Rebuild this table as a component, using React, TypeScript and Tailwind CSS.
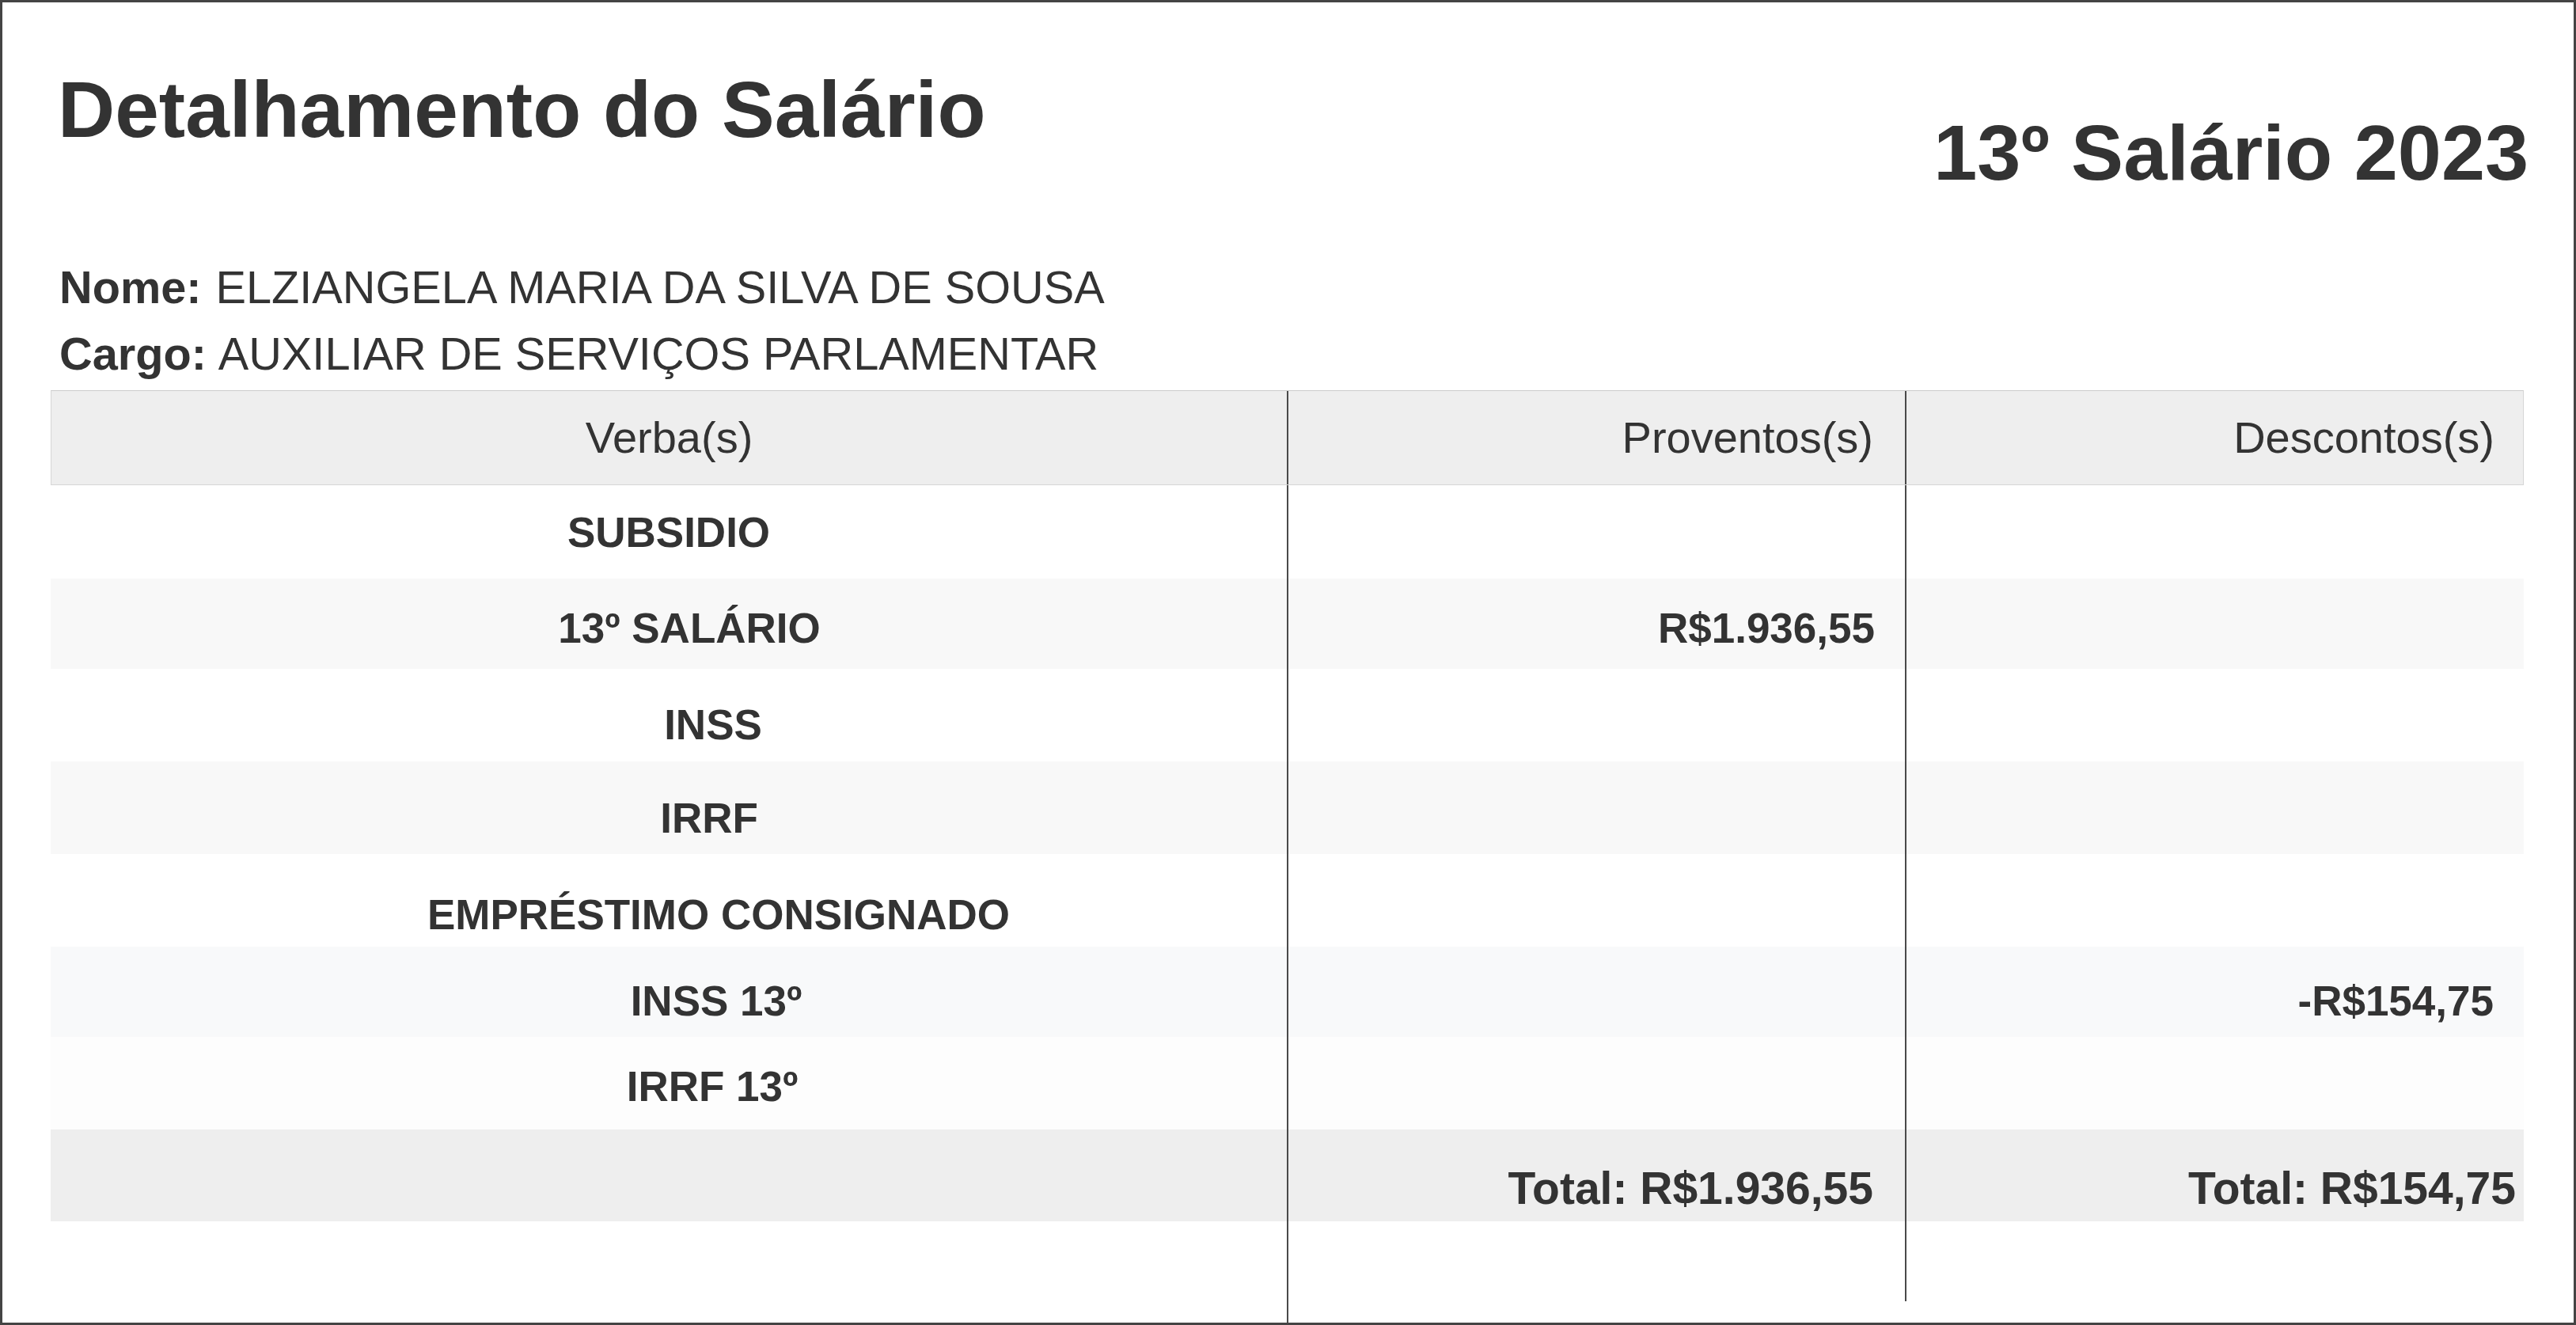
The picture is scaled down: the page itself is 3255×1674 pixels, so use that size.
const rows = [
  { verba: "SUBSIDIO", proventos: "", descontos: "", bg: "bg-white", h: "h-[118px]", pt: "pt-[33px]", pl: "pl-0" },
  { verba: "13º SALÁRIO", proventos: "R$1.936,55", descontos: "", bg: "bg-[#f8f8f8]", h: "h-[114px]", pt: "pt-[36px]", pl: "pl-[52px]" },
  { verba: "INSS", proventos: "", descontos: "", bg: "bg-white", h: "h-[117px]", pt: "pt-[44px]", pl: "pl-[112px]" },
  { verba: "IRRF", proventos: "", descontos: "", bg: "bg-[#f8f8f8]", h: "h-[117px]", pt: "pt-[45px]", pl: "pl-[102px]" },
  { verba: "EMPRÉSTIMO CONSIGNADO", proventos: "", descontos: "", bg: "bg-white", h: "h-[117px]", pt: "pt-[50px]", pl: "pl-[126px]" },
  { verba: "INSS 13º", proventos: "", descontos: "-R$154,75", bg: "bg-[#f8f9fa]", h: "h-[114px]", pt: "pt-[42px]", pl: "pl-[120px]" },
  { verba: "IRRF 13º", proventos: "", descontos: "", bg: "bg-[#fdfdfd]", h: "h-[117px]", pt: "pt-[36px]", pl: "pl-[110px]" },
];

const App = () => {
  return (
    <div className="w-[3255px] h-[1674px] border-[3px] border-[#444] bg-white text-[#333] font-['Liberation_Sans',Arial,sans-serif] flex flex-col pt-[85px] pl-[61px] pr-[63px] overflow-hidden">
      {/* header */}
      <div className="flex justify-between items-start h-[233px]">
        <h1 className="text-[100px] leading-none font-bold pl-[9px]">Detalhamento do Salário</h1>
        <h1 className="text-[99px] leading-none font-bold mt-[55px] mr-[-6px]">13º Salário 2023</h1>
      </div>

      <div className="text-[57.7px] leading-[84px] pl-[11px]">
        <p>
          <span className="font-bold mr-[2px]">Nome:</span> ELZIANGELA MARIA DA SILVA DE SOUSA
        </p>
        <p>
          <span className="font-bold mr-[2px]">Cargo:</span> AUXILIAR DE SERVIÇOS PARLAMENTAR
        </p>
      </div>

      {/* tabela */}
      <div className="flex flex-col flex-1 pt-[4px]">
        <div className="grid grid-cols-[1561px_781px_1fr] h-[120px] bg-[#eeeeee] border border-[#d6d6d6] border-t-[#cccccc] text-[56px]">
          <div className="flex items-center justify-center">Verba(s)</div>
          <div className="flex items-center justify-end pr-[40px] border-l-2 border-[#4a4a4a]">Proventos(s)</div>
          <div className="flex items-center justify-end pr-[36px] border-l-2 border-[#4a4a4a]">Descontos(s)</div>
        </div>

        {rows.map((row) => (
          <div
            key={row.verba}
            className={`grid grid-cols-[1562px_781px_1fr] ${row.h} ${row.bg} text-[53px] leading-[53px] font-bold`}
          >
            <div className={`text-center ${row.pt} ${row.pl}`}>{row.verba}</div>
            <div className={`text-right pr-[38px] border-l-2 border-[#4a4a4a] ${row.pt}`}>{row.proventos}</div>
            <div className={`text-right pr-[38px] border-l-2 border-[#4a4a4a] ${row.pt}`}>{row.descontos}</div>
          </div>
        ))}

        <div className="grid grid-cols-[1562px_781px_1fr] h-[116px] bg-[#eeeeee] text-[57px] leading-[57px] font-bold">
          <div />
          <div className="text-right pr-[40px] pt-[46px] border-l-2 border-[#4a4a4a]">Total: R$1.936,55</div>
          <div className="text-right pr-[10px] pt-[46px] border-l-2 border-[#4a4a4a]">Total: R$154,75</div>
        </div>

        <div className="grid grid-cols-[1562px_781px_1fr] h-[101px]">
          <div />
          <div className="border-l-2 border-[#4a4a4a]" />
          <div className="border-l-2 border-[#4a4a4a]" />
        </div>
        <div className="grid grid-cols-[1562px_781px_1fr] flex-1">
          <div />
          <div className="border-l-2 border-[#4a4a4a]" />
          <div />
        </div>
      </div>
    </div>
  );
};

export default App;
